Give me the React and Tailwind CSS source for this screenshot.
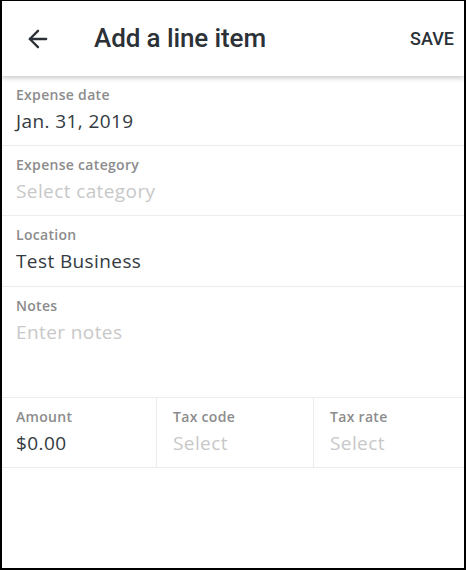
import { ArrowLeft } from "lucide-react";

const Field = ({ label, value, placeholder, className = "" }) => (
  <div className={`px-[14px] pt-[10px] ${className}`}>
    <div className="text-[14px] font-semibold text-[#8c8c8c] leading-[18px] tracking-[0.3px]">{label}</div>
    <div
      className={`mt-[4px] text-[19px] leading-[26px] tracking-[0.4px] ${
        value ? "text-[#333a40]" : "text-[#c8c8c8]"
      }`}
    >
      {value || placeholder}
    </div>
  </div>
);

export default function App() {
  return (
    <div className="w-[466px] h-[570px] bg-black pt-[1px] pl-[2px] pr-[2px] pb-[2px] font-['Open_Sans',sans-serif]">
      <div className="h-full bg-white flex flex-col overflow-hidden">
        {/* Header */}
        <div className="relative z-10 h-[75px] shrink-0 flex items-center px-[22px] bg-white shadow-[0_2px_5px_rgba(0,0,0,0.22)] font-['Roboto',sans-serif]">
          <ArrowLeft className="w-[28px] h-[28px] text-[#2b3137]" strokeWidth={2} />
          <h1 className="ml-[42px] text-[26px] font-medium text-[#2b3137] tracking-[-0.1px]">
            Add a line item
          </h1>
          <button className="ml-auto -mr-[12px] text-[18px] font-medium text-[#2b3137]">SAVE</button>
        </div>

        {/* Fields */}
        <div className="h-[70px] shrink-0 border-b border-[#ececec]">
          <Field label="Expense date" value="Jan. 31, 2019" />
        </div>
        <div className="h-[70px] shrink-0 border-b border-[#ececec]">
          <Field label="Expense category" placeholder="Select category" />
        </div>
        <div className="h-[71px] shrink-0 border-b border-[#ececec]">
          <Field label="Location" value="Test Business" />
        </div>
        <div className="h-[111px] shrink-0 border-b border-[#ececec]">
          <Field label="Notes" placeholder="Enter notes" />
        </div>
        <div className="h-[70px] shrink-0 grid grid-cols-[155px_157px_1fr] border-b border-[#ececec]">
          <Field label="Amount" value="$0.00" className="border-r border-[#ececec]" />
          <Field label="Tax code" placeholder="Select" className="border-r border-[#ececec] pl-[16px]" />
          <Field label="Tax rate" placeholder="Select" className="pl-[16px]" />
        </div>
      </div>
    </div>
  );
}
